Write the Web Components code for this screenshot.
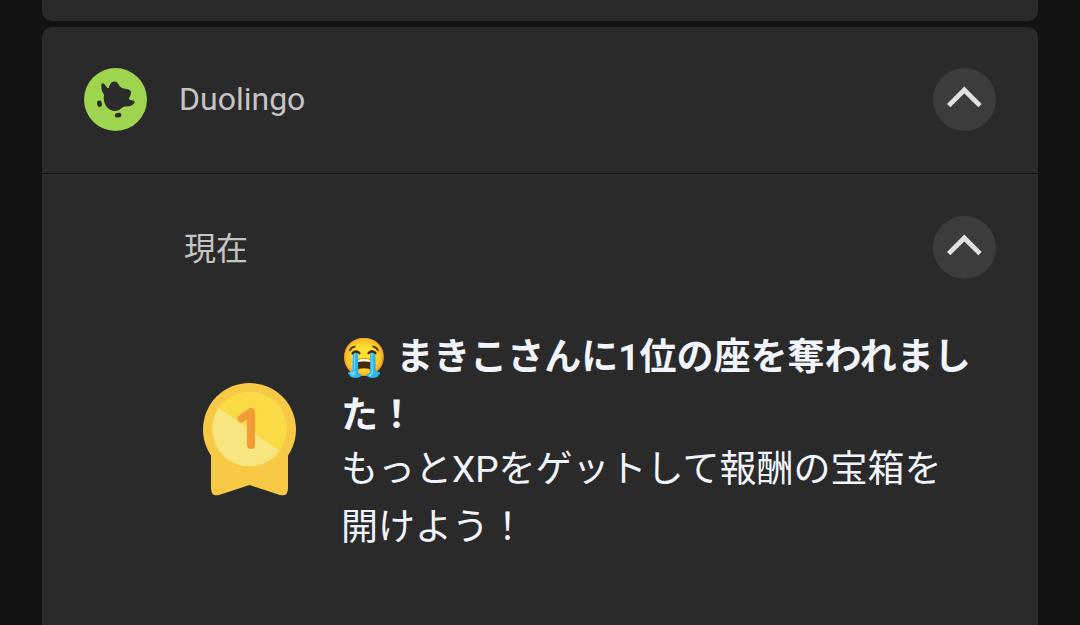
<!DOCTYPE html>
<html lang="ja">
<head>
<meta charset="utf-8">
<meta name="viewport" content="width=device-width, initial-scale=1">
<title>通知</title>
<style>
html, body { height: 100%; }
body { margin: 0; background: #131313; font-family: Roboto, "Noto Sans CJK JP", "Noto Color Emoji", sans-serif; }
</style>
</head>
<body>
<notification-shade>
  <notification-card class="previous"></notification-card>
  <notification-card class="current">
    <app-header>
      <duolingo-icon slot="icon"></duolingo-icon>
      Duolingo
      <collapse-button slot="action" label="Duolingoの通知を折りたたむ"></collapse-button>
    </app-header>
    <notification-entry>
      <span slot="time">現在</span>
      <collapse-button slot="action" label="通知を折りたたむ"></collapse-button>
      <medal-icon slot="picture"></medal-icon>
      <span slot="title">😭 まきこさんに1位の座を奪われました！</span>
      <span slot="text">もっとXPをゲットして報酬の宝箱を開けよう！</span>
    </notification-entry>
  </notification-card>
</notification-shade>
<script>
function define(name, html, setup) {
  const template = document.createElement('template');
  template.innerHTML = html;
  customElements.define(name, class extends HTMLElement {
    constructor() {
      super();
      this.attachShadow({ mode: 'open' }).append(template.content.cloneNode(true));
    }
    connectedCallback() { if (setup) setup(this); }
  });
}

define('notification-shade', `
<style>
:host { display: flex; flex-direction: column; gap: 6px; box-sizing: border-box; height: 100vh; padding: 0 42px; overflow: hidden; }
::slotted(.previous) { height: 21px; flex: none; border-radius: 0 0 10px 10px; }
::slotted(.current) { flex: 1 0 auto; border-radius: 10px 10px 0 0; }
</style><slot></slot>`);

define('notification-card', `
<style>:host { display: block; background: #2a2a2a; overflow: hidden; }</style><slot></slot>`);

define('app-header', `
<style>
:host { display: block; border-bottom: 1px solid #151515; }
header { display: flex; align-items: center; padding: 41px 42px 42px; }
h1 { flex: 1; margin: 0 32px; padding-bottom: 2px; font-size: 32px; line-height: 40px; font-weight: 400; color: #c4c4c4; }
</style>
<header><slot name="icon"></slot><h1><slot></slot></h1><slot name="action"></slot></header>`);

define('notification-entry', `
<style>
:host { display: block; padding: 42px 42px 72px; }
.top { display: flex; align-items: center; justify-content: space-between; padding-left: 100px; font-size: 32px; line-height: 40px; color: #c4c4c4; }
.time { padding-top: 2px; }
.body { display: flex; align-items: center; gap: 45px; padding: 42px 21px 0 119px; font-size: 37px; line-height: 58px; color: #f1f5fb; }
.copy { flex: 1; padding-top: 8px; }
h2, p { margin: 0; font-size: inherit; line-break: anywhere; }
h2 { font-weight: 700; }
p { margin-top: -4px; }
</style>
<article>
  <div class="top"><div class="time"><slot name="time"></slot></div><slot name="action"></slot></div>
  <div class="body">
    <slot name="picture"></slot>
    <div class="copy"><h2><slot name="title"></slot></h2><p><slot name="text"></slot></p></div>
  </div>
</article>`);

define('collapse-button', `
<style>
:host { display: block; flex: none; }
button { display: block; width: 63px; height: 63px; padding: 0; border: 0; border-radius: 50%; background: #3c3c3c; cursor: pointer; }
svg { display: block; }
</style>
<button type="button" aria-expanded="true"><svg width="63" height="63" viewBox="0 0 63 63" aria-hidden="true"><path d="M15.700 37.600 31.300 22 47 37.600" fill="none" stroke="#e2e2e2" stroke-width="4.800"/></svg></button>`,
el => el.shadowRoot.querySelector('button').setAttribute('aria-label', el.getAttribute('label')));

define('duolingo-icon', `
<style>:host { display: block; flex: none; } svg { display: block; }</style>
<svg width="63" height="63" viewBox="0 0 63 63" role="img" aria-label="Duolingo">
<circle cx="31.500" cy="31.500" r="31.500" fill="#9fd44f"/>
<g fill="#2b2b2b">
<path d="M17.300 17C17.500 14.800 19.500 14.800 20.700 16.500L23.500 20H24.800C25.500 17 26.800 13.500 30.500 13.500C34 13.500 34.300 17 36.500 19C39 21 43.500 20.800 45.800 22C48 23.500 47 26.500 45.800 28.500C45 30 44.500 31.300 46 32L49.800 32.800C52 34 49.500 36.600 47 37.800C44.500 39 42 38 39.800 38.800C37 40 35.500 43 31.300 43C27 43 23.700 40.500 21.800 37.500C19.500 34 19.500 30 20 26.500C18 24 17 20.500 17.300 17Z"/>
<rect x="13.200" y="32.500" width="4.600" height="6.400" rx="2.200" transform="rotate(-10 15.500 35.700)"/>
<rect x="30.800" y="45" width="6.600" height="4.400" rx="2" transform="rotate(-8 34 47.200)"/>
</g></svg>`);

define('medal-icon', `
<style>:host { display: block; flex: none; } svg { display: block; }</style>
<svg width="93" height="113" viewBox="0 0 93 113" role="img" aria-label="1位のメダル">
<defs><clipPath id="face"><circle cx="46.500" cy="46" r="37.300"/></clipPath></defs>
<path d="M8 65H85V105Q85 114 77 112L46.500 102 16 112Q8 114 8 105Z" fill="#f7c945"/>
<circle cx="46.500" cy="46.500" r="46.500" fill="#f7c945"/>
<g clip-path="url(#face)">
<path d="M0 0H93V93H0Z" fill="#fada45"/>
<path d="M0 13.700 93 79.500V93H0Z" fill="#f7e57f"/>
</g>
<path d="M38.500 35.500 48 29V62" fill="none" stroke="#f29c38" stroke-width="8" stroke-linecap="round" stroke-linejoin="round"/>
</svg>`);
</script>
</body>
</html>
